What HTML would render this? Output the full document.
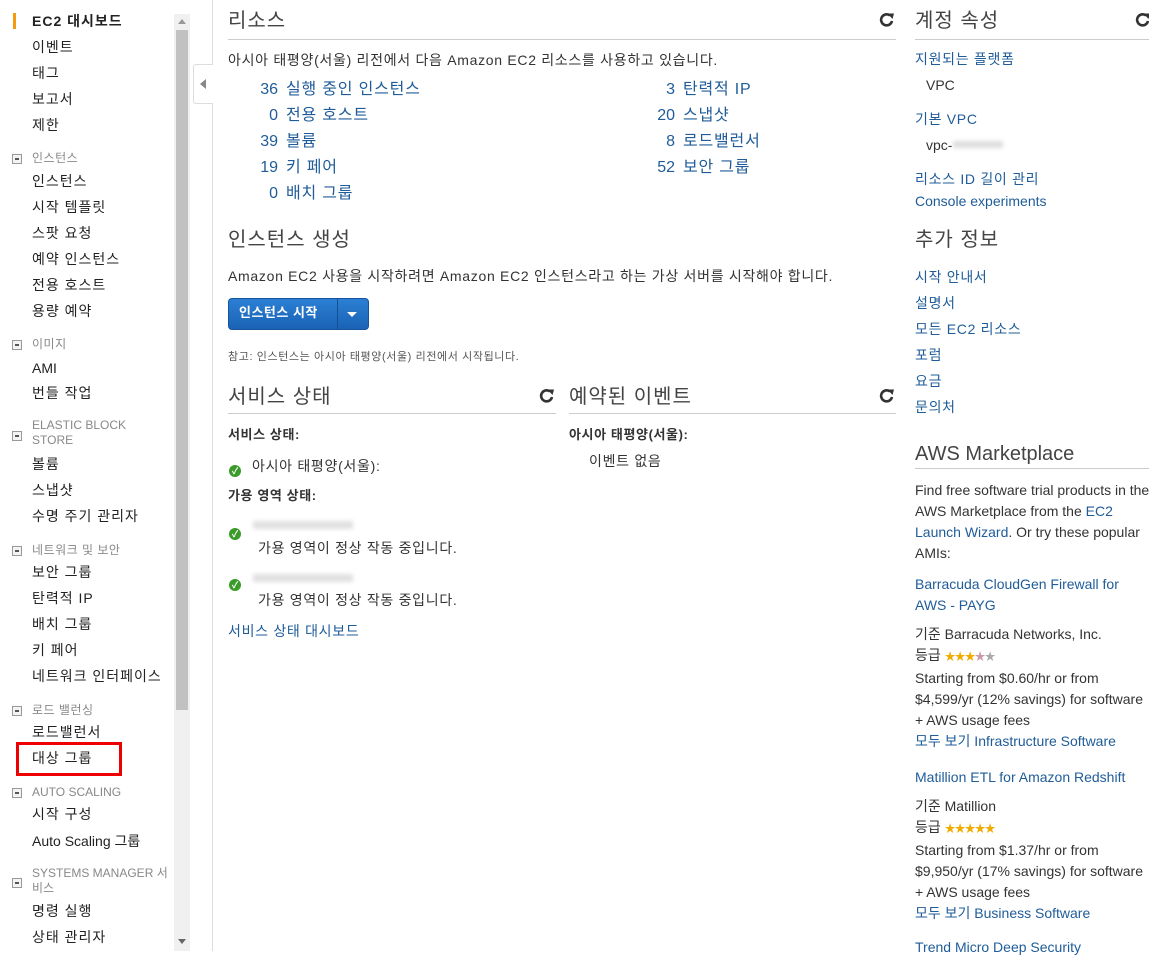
<!DOCTYPE html>
<html><head><meta charset="utf-8">
<style>
*{margin:0;padding:0;box-sizing:border-box}
body{width:1149px;height:951px;overflow:hidden;background:#fff;position:relative;font-family:"Liberation Sans","Noto Sans CJK KR",sans-serif;color:#333;font-size:14px}
.t{position:absolute;white-space:nowrap;line-height:18px}
.s{font-size:14px;color:#222;letter-spacing:1px}
.h{font-size:12px;color:#888;letter-spacing:.5px}
.k{letter-spacing:.7px}
.a{color:#1f5c99}
.g{font-size:20px;line-height:24px;color:#444;letter-spacing:1px}
.r{position:absolute;height:1px;background:#ccc}
.m{position:absolute;width:10px;height:10px;border:1px solid #999;background:#f4f4f4}
.m:after{content:"";position:absolute;left:2px;top:3px;width:4px;height:2px;background:#555}
.ref{position:absolute;width:16px;height:16px}
.ok{position:absolute;width:12px;height:12px;border-radius:50%;background:#3a9b2b;color:#fff;font-size:9px;line-height:12px;text-align:center;font-weight:bold}
.n{display:inline-block;width:38px;text-align:right;margin-right:8px;letter-spacing:0}
.rl{font-size:16px;line-height:20px;letter-spacing:.8px}
.st{color:#f0ad00;font-size:11px;letter-spacing:-1px}
.rc{font-size:14px;line-height:21px}
</style></head><body>
<!-- sidebar -->
<div style="position:absolute;left:13px;top:13px;width:3px;height:16px;background:#f39c12"></div>
<div class="t s" style="left:32px;top:12px;font-weight:bold">EC2 대시보드</div>
<div class="t s" style="left:32px;top:38px">이벤트</div>
<div class="t s" style="left:32px;top:64px">태그</div>
<div class="t s" style="left:32px;top:90px">보고서</div>
<div class="t s" style="left:32px;top:116px">제한</div>
<div class="m" style="left:12px;top:154px"></div><div class="t h" style="left:32px;top:149px">인스턴스</div>
<div class="t s" style="left:32px;top:172px">인스턴스</div>
<div class="t s" style="left:32px;top:198px">시작 템플릿</div>
<div class="t s" style="left:32px;top:224px">스팟 요청</div>
<div class="t s" style="left:32px;top:250px">예약 인스턴스</div>
<div class="t s" style="left:32px;top:276px">전용 호스트</div>
<div class="t s" style="left:32px;top:302px">용량 예약</div>
<div class="m" style="left:12px;top:340px"></div><div class="t h" style="left:32px;top:335px">이미지</div>
<div class="t s" style="left:32px;top:359px;letter-spacing:0">AMI</div>
<div class="t s" style="left:32px;top:384px">번들 작업</div>
<div class="m" style="left:12px;top:431px"></div><div class="t h" style="left:32px;top:418px;line-height:15px;letter-spacing:0">ELASTIC BLOCK<br>STORE</div>
<div class="t s" style="left:32px;top:455px">볼륨</div>
<div class="t s" style="left:32px;top:481px">스냅샷</div>
<div class="t s" style="left:32px;top:507px">수명 주기 관리자</div>
<div class="m" style="left:12px;top:546px"></div><div class="t h" style="left:32px;top:541px">네트워크 및 보안</div>
<div class="t s" style="left:32px;top:563px">보안 그룹</div>
<div class="t s" style="left:32px;top:589px">탄력적 IP</div>
<div class="t s" style="left:32px;top:615px">배치 그룹</div>
<div class="t s" style="left:32px;top:641px">키 페어</div>
<div class="t s" style="left:32px;top:667px">네트워크 인터페이스</div>
<div class="m" style="left:12px;top:706px"></div><div class="t h" style="left:32px;top:701px">로드 밸런싱</div>
<div class="t s" style="left:32px;top:723px">로드밸런서</div>
<div style="position:absolute;left:16px;top:742px;width:106px;height:34px;border:3px solid #e00"></div>
<div class="t s" style="left:32px;top:749px">대상 그룹</div>
<div class="m" style="left:12px;top:788px"></div><div class="t h" style="left:32px;top:783px;letter-spacing:0">AUTO SCALING</div>
<div class="t s" style="left:32px;top:805px">시작 구성</div>
<div class="t s" style="left:32px;top:832px;letter-spacing:0">Auto Scaling 그룹</div>
<div class="m" style="left:12px;top:878px"></div><div class="t h" style="left:32px;top:866px;line-height:15px;letter-spacing:0">SYSTEMS MANAGER 서<br>비스</div>
<div class="t s" style="left:32px;top:902px">명령 실행</div>
<div class="t s" style="left:32px;top:928px">상태 관리자</div>
<!-- scrollbar -->
<div style="position:absolute;left:174px;top:14px;width:16px;height:937px;background:#f0f0f0"></div>
<div style="position:absolute;left:176px;top:30px;width:12px;height:680px;background:#c1c1c1"></div>
<div style="position:absolute;left:178px;top:19px;border:4px solid transparent;border-bottom:5px solid #999;border-top:0"></div>
<div style="position:absolute;left:178px;top:939px;border:4px solid transparent;border-top:5px solid #666;border-bottom:0"></div>
<div style="position:absolute;left:212px;top:0;width:1px;height:951px;background:#ddd"></div>
<div style="position:absolute;left:193px;top:64px;width:20px;height:40px;border:1px solid #ddd;border-right:0;background:#fff;border-radius:3px 0 0 3px"></div>
<div style="position:absolute;left:200px;top:79px;border:5px solid transparent;border-right:6px solid #888;border-left:0"></div>
<!-- main -->
<svg width="0" height="0" style="position:absolute"><defs><g id="rf"><path d="M13 9a5.5 5.5 0 1 1-2-5.5" fill="none" stroke="#333" stroke-width="2.6"/><path d="M8.5 1.5L15 1.5 13.5 7z" fill="#333"/></g></defs></svg>
<div class="t g" style="left:228px;top:9px">리소스</div>
<svg class="ref" style="left:879px;top:12px" viewBox="0 0 16 16"><use href="#rf"/></svg>
<div class="r" style="left:228px;top:39px;width:668px"></div>
<div class="t k" style="left:228px;top:51px">아시아 태평양(서울) 리전에서 다음 Amazon EC2 리소스를 사용하고 있습니다.</div>
<div class="t a rl" style="left:240px;top:80px"><span class="n">36</span>실행 중인 인스턴스</div>
<div class="t a rl" style="left:240px;top:106px"><span class="n">0</span>전용 호스트</div>
<div class="t a rl" style="left:240px;top:132px"><span class="n">39</span>볼륨</div>
<div class="t a rl" style="left:240px;top:158px"><span class="n">19</span>키 페어</div>
<div class="t a rl" style="left:240px;top:184px"><span class="n">0</span>배치 그룹</div>
<div class="t a rl" style="left:637px;top:80px"><span class="n">3</span>탄력적 IP</div>
<div class="t a rl" style="left:637px;top:106px"><span class="n">20</span>스냅샷</div>
<div class="t a rl" style="left:637px;top:132px"><span class="n">8</span>로드밸런서</div>
<div class="t a rl" style="left:637px;top:158px"><span class="n">52</span>보안 그룹</div>
<div class="t g" style="left:228px;top:228px">인스턴스 생성</div>
<div class="t k" style="left:228px;top:267px">Amazon EC2 사용을 시작하려면 Amazon EC2 인스턴스라고 하는 가상 서버를 시작해야 합니다.</div>
<div style="position:absolute;left:228px;top:298px;width:141px;height:32px;background:linear-gradient(#2b7fd4,#1a63b6);border:1px solid #17539a;border-radius:4px"></div>
<div style="position:absolute;left:337px;top:299px;width:1px;height:30px;background:#14508f"></div>
<div class="t" style="left:239px;top:304px;color:#fff;font-weight:bold;font-size:13px;letter-spacing:.5px">인스턴스 시작</div>
<div style="position:absolute;left:347px;top:312px;border:5px solid transparent;border-top:5px solid #fff;border-bottom:0"></div>
<div class="t" style="left:228px;top:348px;font-size:11px;color:#555;letter-spacing:.6px">참고: 인스턴스는 아시아 태평양(서울) 리전에서 시작됩니다.</div>
<div class="t g" style="left:228px;top:385px">서비스 상태</div>
<svg class="ref" style="left:539px;top:388px" viewBox="0 0 16 16"><use href="#rf"/></svg>
<div class="r" style="left:228px;top:413px;width:328px"></div>
<div class="t" style="left:228px;top:426px;font-size:13px;font-weight:bold;letter-spacing:.6px">서비스 상태:</div>
<div class="ok" style="left:229px;top:465px">✓</div>
<div class="t k" style="left:252px;top:457px">아시아 태평양(서울):</div>
<div class="t" style="left:228px;top:487px;font-size:13px;font-weight:bold;letter-spacing:.6px">가용 영역 상태:</div>
<div class="ok" style="left:229px;top:528px">✓</div>
<div style="position:absolute;left:253px;top:521px;width:100px;height:8px;background:#e0e0e0;filter:blur(2px)"></div>
<div class="t k" style="left:258px;top:539px">가용 영역이 정상 작동 중입니다.</div>
<div class="ok" style="left:229px;top:579px">✓</div>
<div style="position:absolute;left:253px;top:574px;width:100px;height:8px;background:#e0e0e0;filter:blur(2px)"></div>
<div class="t k" style="left:258px;top:591px">가용 영역이 정상 작동 중입니다.</div>
<div class="t a k" style="left:228px;top:622px">서비스 상태 대시보드</div>
<div class="t g" style="left:569px;top:385px">예약된 이벤트</div>
<svg class="ref" style="left:879px;top:388px" viewBox="0 0 16 16"><use href="#rf"/></svg>
<div class="r" style="left:569px;top:413px;width:327px"></div>
<div class="t" style="left:569px;top:426px;font-size:13px;font-weight:bold;letter-spacing:.6px">아시아 태평양(서울):</div>
<div class="t k" style="left:589px;top:452px">이벤트 없음</div>
<!-- right -->
<div class="t g" style="left:915px;top:9px">계정 속성</div>
<svg class="ref" style="left:1135px;top:12px" viewBox="0 0 16 16"><use href="#rf"/></svg>
<div class="r" style="left:915px;top:39px;width:234px"></div>
<div class="t a k" style="left:915px;top:50px">지원되는 플랫폼</div>
<div class="t" style="left:926px;top:76px">VPC</div>
<div class="t a k" style="left:915px;top:110px">기본 VPC</div>
<div class="t" style="left:926px;top:136px">vpc-</div>
<div style="position:absolute;left:953px;top:141px;width:50px;height:7px;background:#ddd;filter:blur(2px)"></div>
<div class="t a k" style="left:915px;top:170px">리소스 ID 길이 관리</div>
<div class="t a" style="left:915px;top:192px">Console experiments</div>
<div class="t g" style="left:915px;top:228px">추가 정보</div>
<div class="t a k" style="left:915px;top:268px">시작 안내서</div>
<div class="t a k" style="left:915px;top:294px">설명서</div>
<div class="t a k" style="left:915px;top:320px">모든 EC2 리소스</div>
<div class="t a k" style="left:915px;top:346px">포럼</div>
<div class="t a k" style="left:915px;top:372px">요금</div>
<div class="t a k" style="left:915px;top:398px">문의처</div>
<div class="t g" style="left:915px;top:442px;letter-spacing:0">AWS Marketplace</div>
<div class="r" style="left:915px;top:468px;width:234px"></div>
<div class="t rc" style="left:915px;top:480px">Find free software trial products in the<br>AWS Marketplace from the <span class="a">EC2</span><br><span class="a">Launch Wizard</span>. Or try these popular<br>AMIs:</div>
<div class="t a rc" style="left:915px;top:574px">Barracuda CloudGen Firewall for<br>AWS - PAYG</div>
<div class="t rc" style="left:915px;top:624px">기준 Barracuda Networks, Inc.<br>등급 <span class="st">★★★<span style="color:#c9a">★</span><span style="color:#aaa">★</span></span><br>Starting from $0.60/hr or from<br>$4,599/yr (12% savings) for software<br>+ AWS usage fees<br><span class="a">모두 보기 Infrastructure Software</span></div>
<div class="t a rc" style="left:915px;top:767px">Matillion ETL for Amazon Redshift</div>
<div class="t rc" style="left:915px;top:796px">기준 Matillion<br>등급 <span class="st">★★★★★</span><br>Starting from $1.37/hr or from<br>$9,950/yr (17% savings) for software<br>+ AWS usage fees<br><span class="a">모두 보기 Business Software</span></div>
<div class="t a rc" style="left:915px;top:937px">Trend Micro Deep Security</div>
</body></html>
